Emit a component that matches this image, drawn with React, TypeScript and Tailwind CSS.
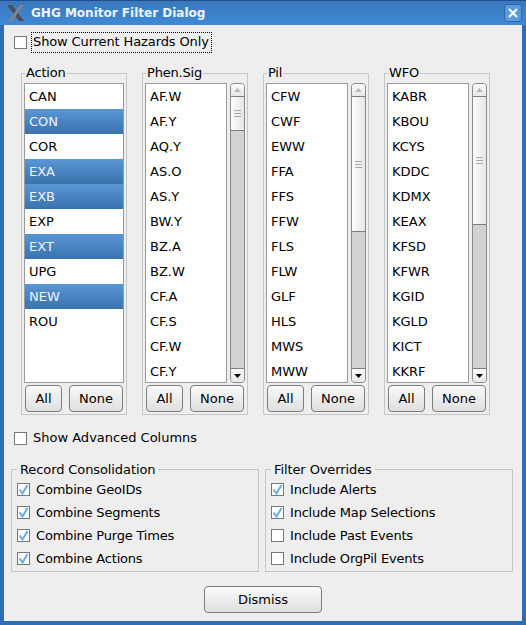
import type { ReactNode } from 'react';

const font = 'font-["DejaVu_Sans",sans-serif]';

type ListCol = {
  title: string;
  items: string[];
  selected?: string[];
  thumbH?: number;
};

const columns: ListCol[] = [
  {
    title: 'Action',
    items: ['CAN', 'CON', 'COR', 'EXA', 'EXB', 'EXP', 'EXT', 'UPG', 'NEW', 'ROU'],
    selected: ['CON', 'EXA', 'EXB', 'EXT', 'NEW'],
  },
  {
    title: 'Phen.Sig',
    items: ['AF.W', 'AF.Y', 'AQ.Y', 'AS.O', 'AS.Y', 'BW.Y', 'BZ.A', 'BZ.W', 'CF.A', 'CF.S', 'CF.W', 'CF.Y'],
    thumbH: 34,
  },
  {
    title: 'Pil',
    items: ['CFW', 'CWF', 'EWW', 'FFA', 'FFS', 'FFW', 'FLS', 'FLW', 'GLF', 'HLS', 'MWS', 'MWW'],
    thumbH: 135,
  },
  {
    title: 'WFO',
    items: ['KABR', 'KBOU', 'KCYS', 'KDDC', 'KDMX', 'KEAX', 'KFSD', 'KFWR', 'KGID', 'KGLD', 'KICT', 'KKRF'],
    thumbH: 128,
  },
];

function Check({ checked }: { checked?: boolean }) {
  return (
    <span className="w-[13px] h-[13px] border border-[#77787a] bg-white shrink-0 flex items-center justify-center">
      {checked && (
        <svg width="11" height="11" viewBox="0 0 11 11">
          <path d="M1.5 5.5 L4.5 9.5 L9.5 1" fill="none" stroke="#6aaae6" strokeWidth="2" />
        </svg>
      )}
    </span>
  );
}

function PushButton({ className, children }: { className: string; children: ReactNode }) {
  return (
    <div
      className={`h-[27px] flex items-center justify-center rounded-[4px] border border-[#7d7d7d] bg-gradient-to-b from-[#fafafa] to-[#dfdfdf] text-[13px] text-black ${className}`}
    >
      {children}
    </div>
  );
}

function Scrollbar({ thumbH }: { thumbH: number }) {
  return (
    <div className="w-[15px] h-[300px] flex flex-col border border-[#8a8a8a] rounded-[4px] bg-[#d2d2d2] overflow-hidden">
      <div className="h-[13px] border-b border-[#7d7d7d] bg-gradient-to-b from-[#fbfbfb] to-[#e8e8e8] flex items-center justify-center">
        <svg width="7" height="4" viewBox="0 0 7 4">
          <path d="M0 4 L3.5 0 L7 4 Z" fill="#b9b9b9" />
        </svg>
      </div>
      <div
        className="border-b border-[#7d7d7d] bg-gradient-to-r from-[#fdfdfd] to-[#e6e6e6] flex flex-col items-center justify-center gap-[2px]"
        style={{ height: thumbH }}
      >
        <span className="w-[7px] h-px bg-[#a8a8a8]" />
        <span className="w-[7px] h-px bg-[#a8a8a8]" />
        <span className="w-[7px] h-px bg-[#a8a8a8]" />
      </div>
      <div className="flex-1" />
      <div className="h-[14px] border-t border-[#7d7d7d] bg-gradient-to-b from-[#fbfbfb] to-[#e8e8e8] flex items-center justify-center">
        <svg width="7" height="4" viewBox="0 0 7 4">
          <path d="M0 0 L7 0 L3.5 4 Z" fill="#000" />
        </svg>
      </div>
    </div>
  );
}

function ListGroup({ col }: { col: ListCol }) {
  const hasScroll = col.thumbH !== undefined;
  return (
    <div className="relative w-[106px] h-[342px] border border-[#c6c6c6] pt-[9px] px-[2px]">
      <span className="absolute left-[3px] top-[-9px] bg-[#eeeeee] px-px text-[13px] leading-[16px] text-black tracking-[-0.2px]">
        {col.title}
      </span>
      <div className="flex gap-[3px]">
        <div className={`h-[300px] border border-[#9a9a9a] bg-white overflow-hidden ${hasScroll ? 'w-[83px]' : 'w-full'}`}>
          {col.items.map((item) => {
            const isSel = col.selected?.includes(item);
            return (
              <div
                key={item}
                className={`h-[25px] pl-[4px] flex items-center text-[13px] ${
                  isSel ? 'bg-gradient-to-b from-[#5a96d6] to-[#3a73ad] text-[#eef4fb]' : 'text-black'
                }`}
              >
                {item}
              </div>
            );
          })}
        </div>
        {hasScroll && <Scrollbar thumbH={col.thumbH!} />}
      </div>
      <div className="flex gap-[7px] mt-[2px] pl-px">
        <PushButton className="w-[37px]">All</PushButton>
        <PushButton className="w-[54px]">None</PushButton>
      </div>
    </div>
  );
}

function OptionGroup({ title, rows }: { title: string; rows: [string, boolean][] }) {
  return (
    <div className="relative w-[248px] h-[103px] border border-[#c6c6c6] pl-[5px] pt-[8px] flex flex-col">
      <span className="absolute left-[5px] top-[-8px] bg-[#eeeeee] px-[3px] text-[13px] leading-[16px] text-black tracking-[-0.1px]">
        {title}
      </span>
      {rows.map(([label, checked]) => (
        <div key={label} className="h-[23px] flex items-center gap-[6px] text-[13px] text-black tracking-[-0.2px]">
          <Check checked={checked} />
          {label}
        </div>
      ))}
    </div>
  );
}

export default function App() {
  return (
    <div className={`w-[526px] h-[625px] flex flex-col overflow-hidden bg-[#2f6db5] ${font}`}>
      {/* Title bar */}
      <div className="h-[25px] shrink-0 flex items-center pl-[6px] pr-[4px] bg-gradient-to-b from-[#3a78bc] to-[#3f8ad6] border-t border-[#1f4f8a]">
        <svg width="20" height="18" viewBox="0 0 20 18" className="shrink-0">
          <path d="M1 1 L6 1 L18 17 L13 17 Z" fill="#4a4e56" />
          <path d="M18 1 L14 1 L2 17 L6 17 Z" fill="#7f8590" />
        </svg>
        <span className="ml-[5px] text-[12px] font-bold text-[#eef4fb]">GHG Monitor Filter Dialog</span>
        <div className="ml-auto w-[18px] h-[18px] rounded-[3px] border border-[#2f66a8] bg-[#5a9ade] flex items-center justify-center">
          <svg width="10" height="10" viewBox="0 0 10 10">
            <path d="M1 1 L9 9 M9 1 L1 9" stroke="#fff" strokeWidth="2.2" />
          </svg>
        </div>
      </div>

      {/* Dialog body */}
      <div className="mx-[4px] h-[596px] bg-[#eeeeee] flex flex-col">
        <div className="h-[20px] mt-[7px] ml-[10px] flex items-center">
          <Check />
          <span className="ml-[4px] w-[181px] h-[21px] px-px flex items-center border border-dotted border-black text-[13px] text-black tracking-[-0.12px]">
            Show Current Hazards Only
          </span>
        </div>

        <div className="flex gap-[15px] mt-[21px] ml-[17px]">
          {columns.map((col) => (
            <ListGroup key={col.title} col={col} />
          ))}
        </div>

        <div className="mt-[13px] ml-[10px] h-[20px] flex items-center gap-[6px] text-[13px] text-black">
          <Check />
          Show Advanced Columns
        </div>

        <div className="flex gap-[6px] mt-[21px] ml-[7px]">
          <OptionGroup
            title="Record Consolidation"
            rows={[
              ['Combine GeoIDs', true],
              ['Combine Segments', true],
              ['Combine Purge Times', true],
              ['Combine Actions', true],
            ]}
          />
          <OptionGroup
            title="Filter Overrides"
            rows={[
              ['Include Alerts', true],
              ['Include Map Selections', true],
              ['Include Past Events', false],
              ['Include OrgPil Events', false],
            ]}
          />
        </div>

        <div className="flex justify-center mt-[14px]">
          <PushButton className="w-[118px]">Dismiss</PushButton>
        </div>
      </div>
    </div>
  );
}
